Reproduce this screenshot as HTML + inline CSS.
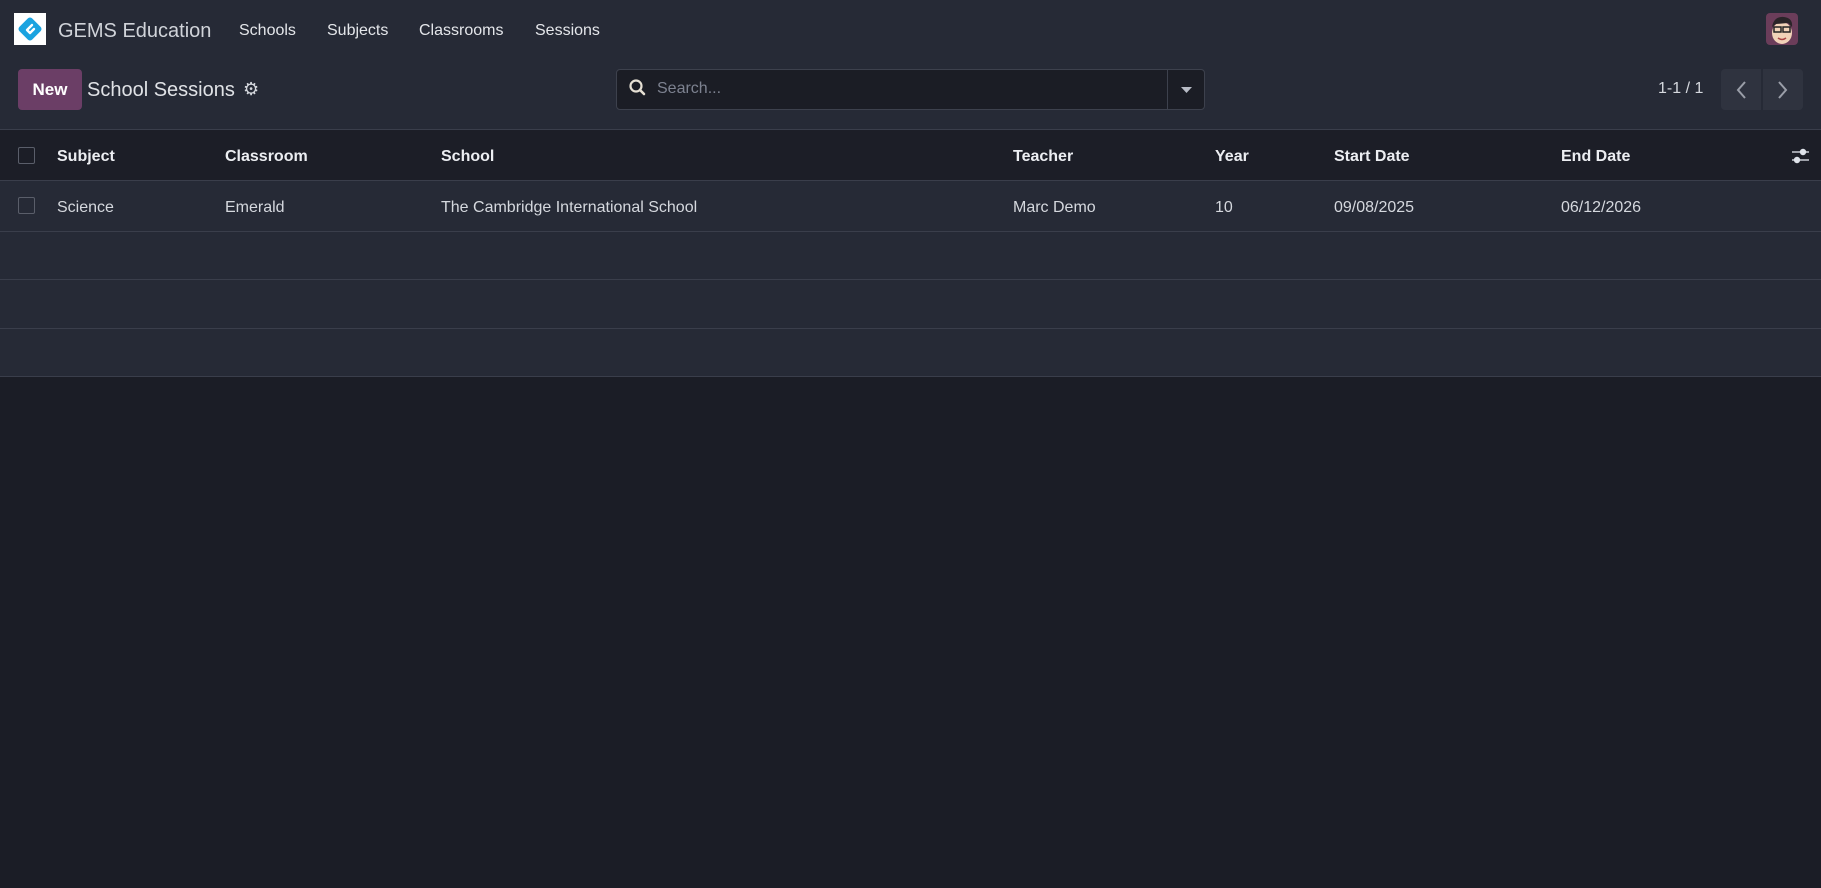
<!DOCTYPE html>
<html><head><meta charset="utf-8"><style>
*{box-sizing:border-box;margin:0;padding:0}
body{width:1821px;height:888px;background:#1b1d26;font-family:"Liberation Sans",sans-serif;color:#d5d8de;position:relative;overflow:hidden}
.top{position:absolute;left:0;top:0;width:1821px;height:130px;background:#262a36;border-bottom:1px solid #3a3e4b}
.abs{position:absolute;white-space:nowrap}
.nav{font-size:16px;top:22px;color:#e4e6ea}
.th{font-weight:bold;font-size:16px;top:148px;color:#eceef2}
.td{font-size:16px;top:199px;color:#d5d8de}
.cb{position:absolute;width:17px;height:17px;border:1px solid #5a5e6a;border-radius:2px;left:18px}
.row{position:absolute;left:0;width:1821px;background:#262a36;border-bottom:1px solid #3a3e4b}
</style></head><body>
<div class="top"></div>
<div class="abs" style="left:14px;top:13px;width:32px;height:32px;background:#fff"></div>
<svg class="abs" style="left:16px;top:15px" width="28" height="28" viewBox="0 0 28 28"><rect x="5" y="5" width="18" height="18" rx="3" transform="rotate(45 14 14)" fill="#1aa3e0"/><path d="M16 10 L11 15 L14 18 L18 14" stroke="#fff" stroke-width="2.4" fill="none" stroke-linecap="round" stroke-linejoin="round"/></svg>
<div class="abs" style="left:58px;top:20px;font-size:20px;color:#d0d3d9">GEMS Education</div>
<div class="abs nav" style="left:239px">Schools</div>
<div class="abs nav" style="left:327px">Subjects</div>
<div class="abs nav" style="left:419px">Classrooms</div>
<div class="abs nav" style="left:535px">Sessions</div>
<div class="abs" style="left:1766px;top:13px;width:32px;height:32px;border-radius:4px;background:#6b3d5a;overflow:hidden">
<svg width="32" height="32" viewBox="0 0 32 32"><ellipse cx="16" cy="20" rx="10" ry="11" fill="#f1d2b8"/><path d="M6 14 Q8 3 18 4 Q27 5 26 14 L22 10 L10 11Z" fill="#2a2428"/><rect x="8" y="14" width="7" height="5" fill="none" stroke="#222" stroke-width="1.5"/><rect x="17" y="14" width="7" height="5" fill="none" stroke="#222" stroke-width="1.5"/><path d="M12 25 Q16 28 20 25" stroke="#a44" stroke-width="1.5" fill="none"/></svg></div>

<div class="abs" style="left:18px;top:69px;width:64px;height:41px;background:#6b3e66;border-radius:4px;color:#fff;font-weight:bold;font-size:17px;line-height:41px;text-align:center">New</div>
<div class="abs" style="left:87px;top:79px;font-size:20px;color:#e0e2e6">School Sessions</div>
<div class="abs" style="left:243px;top:79px;font-size:18px;color:#d5d8de">&#9881;</div>

<div class="abs" style="left:616px;top:69px;width:589px;height:41px;background:#1b1d25;border:1px solid #3d414d;border-radius:4px"></div>
<div class="abs" style="left:1167px;top:70px;width:1px;height:39px;background:#3d414d"></div>
<svg class="abs" style="left:628px;top:78px" width="20" height="20" viewBox="0 0 20 20"><circle cx="8" cy="8" r="5.5" stroke="#e6e0d4" stroke-width="2.2" fill="none"/><path d="M12 12 L16 16" stroke="#e6e0d4" stroke-width="2.6" stroke-linecap="round"/></svg>
<div class="abs" style="left:657px;top:80px;font-size:16px;color:#7d8290">Search...</div>
<svg class="abs" style="left:1181px;top:87px" width="11" height="7"><path d="M0 0 H11 L5.5 6Z" fill="#b8bcc6"/></svg>

<div class="abs" style="left:1658px;top:80px;font-size:16px;color:#d5d8de">1-1 / 1</div>
<div class="abs" style="left:1721px;top:69px;width:40px;height:41px;background:#2f333f;border-radius:4px 0 0 4px"></div>
<div class="abs" style="left:1763px;top:69px;width:40px;height:41px;background:#2f333f;border-radius:0 4px 4px 0"></div>
<svg class="abs" style="left:1735px;top:80px" width="12" height="20"><path d="M10 2 L3 10 L10 18" stroke="#9a9ea8" stroke-width="2" fill="none"/></svg>
<svg class="abs" style="left:1777px;top:80px" width="12" height="20"><path d="M2 2 L9 10 L2 18" stroke="#9a9ea8" stroke-width="2" fill="none"/></svg>

<div class="row" style="top:130px;height:51px;background:#1c1e27"></div>
<div class="row" style="top:181px;height:51px"></div>
<div class="row" style="top:232px;height:48px"></div>
<div class="row" style="top:280px;height:49px"></div>
<div class="row" style="top:329px;height:48px"></div>

<div class="cb" style="top:147px"></div>
<div class="abs th" style="left:57px">Subject</div>
<div class="abs th" style="left:225px">Classroom</div>
<div class="abs th" style="left:441px">School</div>
<div class="abs th" style="left:1013px">Teacher</div>
<div class="abs th" style="left:1215px">Year</div>
<div class="abs th" style="left:1334px">Start Date</div>
<div class="abs th" style="left:1561px">End Date</div>
<svg class="abs" style="left:1790px;top:147px" width="22" height="18"><path d="M2 5 H19 M2 13 H19" stroke="#c8ccd4" stroke-width="1.5"/><circle cx="13" cy="5" r="3.2" fill="#dfe3ea"/><circle cx="7" cy="13" r="3.2" fill="#dfe3ea"/></svg>

<div class="cb" style="top:197px"></div>
<div class="abs td" style="left:57px">Science</div>
<div class="abs td" style="left:225px">Emerald</div>
<div class="abs td" style="left:441px">The Cambridge International School</div>
<div class="abs td" style="left:1013px">Marc Demo</div>
<div class="abs td" style="left:1215px">10</div>
<div class="abs td" style="left:1334px">09/08/2025</div>
<div class="abs td" style="left:1561px">06/12/2026</div>
</body></html>
